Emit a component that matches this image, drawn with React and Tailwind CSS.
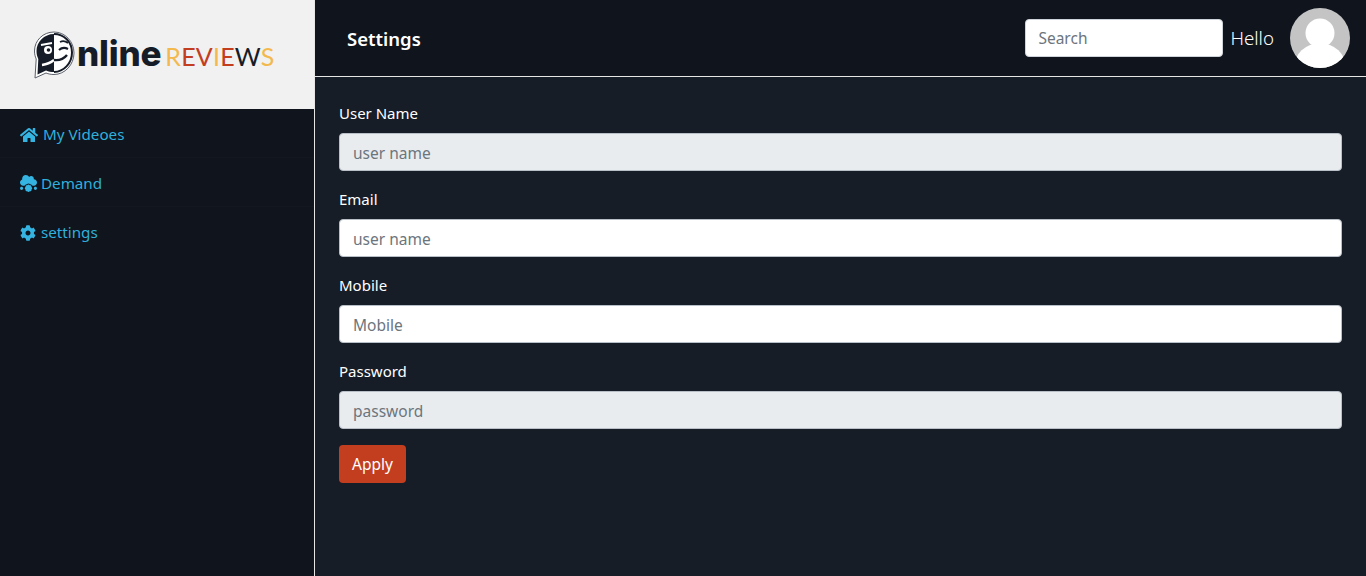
import React from 'react';
import { FaHome, FaCloudMeatball, FaCog } from 'react-icons/fa';

const font = "font-['Noto_Sans','Liberation_Sans',sans-serif]";

const Logo = () => (
  <div className="flex items-start">
    <svg width="44" height="48" viewBox="0 0 44 48" className="shrink-0">
      <path d="M21 1C10 1 1.500 9.500 1.500 20c0 3 .6 5.500 1.700 8L2 47l11-5c2.500 1 5 1.500 8 1.500 11 0 20-10 20-21.500S32 1 21 1z" fill="#fff" stroke="#5a5f68" strokeWidth="1" />
      <path d="M21 3C11 3 3.500 11 3.500 20c0 3 .6 5.500 1.800 8L4.500 43.500 13 39.500c2.500 1 5 1.500 8 1.500z" fill="#161c27" />
      <path d="M21 3c10 0 18 8 18 18.500S31 41 21 41" fill="none" stroke="#161c27" strokeWidth="2" />
      <circle cx="15" cy="19" r="4" fill="#fff" />
      <circle cx="15.500" cy="19" r="1.800" fill="#161c27" />
      <path d="M8 14l11-2" stroke="#fff" strokeWidth="1.800" fill="none" />
      <path d="M26 19q4-3.500 9-1" stroke="#161c27" strokeWidth="2.200" fill="none" />
      <path d="M27 11q4-2 8 1" stroke="#161c27" strokeWidth="1.800" fill="none" />
      <path d="M9 34q7-1 12-5" stroke="#fff" strokeWidth="2.400" fill="none" />
      <path d="M21 29q8 1 13-5" stroke="#161c27" strokeWidth="2.400" fill="none" />
    </svg>
    <span className="font-['Inter',sans-serif] mt-[2px] text-[35px] font-extrabold leading-[40px] tracking-[-0.2px] text-[#161c27]">nline</span>
    <span className="font-['Lato',sans-serif] text-[25px] leading-[30px] ml-[4px] mt-[10px] tracking-[0.2px]">
      <span className="text-[#f3b94f]">R</span>
      <span className="text-[#c23e1f]">EV</span>
      <span className="text-[#f3b94f]">I</span>
      <span className="text-[#c23e1f]">E</span>
      <span className="text-[#161c27]">W</span>
      <span className="text-[#f3b94f]">S</span>
    </span>
  </div>
);

const menu = [
  { label: 'My Videoes', Icon: FaHome, gap: 'gap-[5px]', size: 18 },
  { label: 'Demand', Icon: FaCloudMeatball, gap: 'gap-[4px]', size: 17 },
  { label: 'settings', Icon: FaCog, gap: 'gap-[5px]', size: 16 },
];

const fields = [
  { label: 'User Name', placeholder: 'user name', disabled: true },
  { label: 'Email', placeholder: 'user name' },
  { label: 'Mobile', placeholder: 'Mobile' },
  { label: 'Password', placeholder: 'password', disabled: true },
];

export default function App() {
  return (
    <div className={`flex h-[576px] w-[1366px] overflow-hidden bg-[#161d27] ${font}`}>
      <aside className="flex w-[314px] shrink-0 flex-col bg-[#10151d]">
        <div className="flex h-[109px] items-start bg-[#f1f1f1] pl-[33px] pt-[31px]">
          <Logo />
        </div>
        <nav className="flex flex-col">
          {menu.map(({ label, Icon, gap, size }) => (
            <a key={label} className={`flex h-[49px] items-center border-b border-[#121720] px-5 pt-[3px] text-[15.200px] text-[#2fb0dc] last:border-transparent ${gap}`}>
              <Icon size={size} className="shrink-0 text-[#35b4e2]" />
              {label}
            </a>
          ))}
        </nav>
      </aside>
      <main className="flex min-w-0 flex-1 flex-col border-l border-[#e6e6e6]">
        <header className="flex h-[77px] shrink-0 items-center border-b border-[#e6e6e6] bg-[#10151d] pl-[32px] pr-[16px]">
          <h1 className="pt-[2px] text-[18.500px] font-semibold text-white">Settings</h1>
          <div className="ml-auto flex items-center">
            <input
              placeholder="Search"
              className="h-[38px] w-[198px] rounded border border-[#ced4da] bg-white px-3 text-[15.500px] text-[#495057] outline-none placeholder:text-[#6c757d]"
            />
            <span className="ml-[7px] pt-[1px] text-[18.700px] font-light text-white">Hello</span>
            <div className="ml-[16px] flex h-[60px] w-[60px] items-center justify-center overflow-hidden rounded-full bg-[#c4c4c4]">
              <svg width="60" height="60" viewBox="0 0 60 60">
                <circle cx="30" cy="25" r="14.500" fill="#fff" />
                <ellipse cx="30" cy="60" rx="26" ry="25" fill="#fff" />
              </svg>
            </div>
          </div>
        </header>
        <form className="flex flex-col px-[24px] pt-[24px]">
          {fields.map((f) => (
            <div key={f.label} className="mb-[16px]">
              <label className="mb-[8px] block text-[15px] leading-[24px] text-white">{f.label}</label>
              <input
                disabled={f.disabled}
                placeholder={f.placeholder}
                className={`block h-[38px] w-full rounded border border-[#b9bfc6] pb-0 pl-[13px] pr-3 pt-[1px] text-[15.500px] outline-none placeholder:text-[#6c757d] ${f.disabled ? 'bg-[#e9ecef]' : 'bg-white'}`}
              />
            </div>
          ))}
          <button type="button" className="h-[38px] w-[67px] rounded bg-[#c23e1f] pt-[2px] text-[15.500px] text-white">
            Apply
          </button>
        </form>
      </main>
    </div>
  );
}
